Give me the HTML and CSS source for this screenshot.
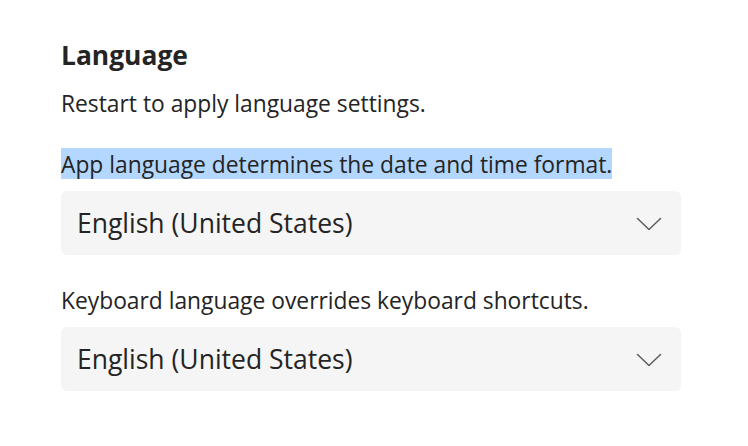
FILE: index.html
```html
<!DOCTYPE html>
<html lang="en">
<head>
<meta charset="utf-8">
<title>Language</title>
<link rel="stylesheet" href="styles.css">
</head>
<body>
<section class="settings">
  <h2 class="title">Language</h2>
  <p class="note">Restart to apply language settings.</p>
  <p class="label label-selected">App language determines the date and time format.</p>
  <div class="select">
    <span class="select-value">English (United States)</span>
    <svg class="chevron" width="26" height="14" viewBox="0 0 26 14" aria-hidden="true"><polyline points="1.5,1.5 13,12.5 24.5,1.5" fill="none" stroke="#616161" stroke-width="1.6" stroke-linecap="round" stroke-linejoin="round"/></svg>
  </div>
  <p class="label label-keyboard">Keyboard language overrides keyboard shortcuts.</p>
  <div class="select">
    <span class="select-value">English (United States)</span>
    <svg class="chevron" width="26" height="14" viewBox="0 0 26 14" aria-hidden="true"><polyline points="1.5,1.5 13,12.5 24.5,1.5" fill="none" stroke="#616161" stroke-width="1.6" stroke-linecap="round" stroke-linejoin="round"/></svg>
  </div>
</section>
</body>
</html>
```
FILE: styles.css
```css
html, body {
  margin: 0;
  padding: 0;
  background: #ffffff;
}

body {
  font-family: "Open Sans", "Noto Sans", sans-serif;
  color: #242424;
}

.settings {
  display: flex;
  flex-direction: column;
  align-items: flex-start;
  padding: 39px 0 0 61px;
  width: 620px;
}

.title {
  margin: 0;
  font-size: 26.4px;
  line-height: 32px;
  font-weight: 700;
}

.note {
  margin: 19px 0 0;
  font-size: 22.8px;
  line-height: 28px;
}

.label {
  margin: 0;
  font-size: 22.8px;
  line-height: 28px;
}

.label-selected {
  margin-top: 30px;
  padding-top: 2px;
  line-height: 29px;
  background: #b3d7fe;
}

.label-keyboard {
  margin-top: 32px;
}

.select {
  align-self: stretch;
  display: flex;
  align-items: center;
  justify-content: space-between;
  height: 64px;
  margin-top: 12px;
  padding: 0 19px 0 16px;
  background: #f5f5f5;
  border-radius: 6px;
}

.select-value {
  font-size: 26.5px;
}

.chevron {
  display: block;
  margin-top: 2px;
}
```
